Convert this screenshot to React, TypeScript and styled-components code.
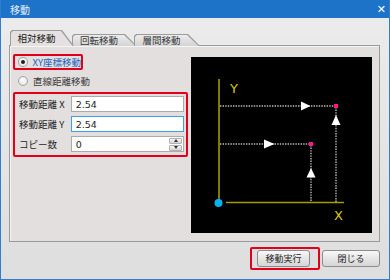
import React from "react";
import styled, { createGlobalStyle } from "styled-components";

const GlobalStyle = createGlobalStyle`
  html, body {
    margin: 0;
    padding: 0;
    background: #ffffff;
  }
  body {
    font-family: "Noto Sans CJK JP", "Liberation Sans", sans-serif;
    font-size: 9.5px;
  }
`;

const Window = styled.div`
  width: 390px;
  height: 280px;
  box-sizing: border-box;
  display: flex;
  flex-direction: column;
  border: 1px solid #2f7fd0;
  border-top: none;
  background: linear-gradient(180deg, #ececec 0%, #dedede 100%);
  overflow: hidden;
`;

const TitleBar = styled.div`
  height: 18px;
  flex: 0 0 18px;
  display: flex;
  align-items: center;
  justify-content: space-between;
  padding: 0 4px 0 10px;
  margin: 0 -1px;
  background: #1c73c7;
  color: #e6eef8;
  font-size: 10px;
`;

const CloseGlyph = styled.span`
  font-family: "DejaVu Sans", sans-serif;
  font-size: 11px;
  font-weight: bold;
  color: #ffffff;
  line-height: 1;
`;

const Body = styled.div`
  flex: 1;
  display: flex;
  flex-direction: column;
  padding: 12px 9px 0 8px;
`;

const TabRow = styled.div`
  display: flex;
  align-items: flex-end;
  height: 16px;
  padding-left: 1px;
  position: relative;
  z-index: 2;
  margin-bottom: -1px;
`;

const TabOuter = styled.div<{ $w: number; $h: number; $active?: boolean; $overlap?: number }>`
  width: ${(p) => p.$w}px;
  height: ${(p) => p.$h}px;
  margin-left: ${(p) => -(p.$overlap || 0)}px;
  background: #9c9c9c;
  clip-path: polygon(0 100%, 0 2px, 2px 0, ${(p) => p.$w - 12}px 0, 100% 100%);
  position: relative;
  z-index: ${(p) => (p.$active ? 3 : 1)};
  flex: 0 0 auto;
`;

const TabInner = styled.div<{ $w: number; $active?: boolean }>`
  position: absolute;
  inset: 1px 0 0 1px;
  background: ${(p) =>
    p.$active ? "#e5e1e0" : "linear-gradient(180deg, #ececec 0%, #d4d4d4 100%)"};
  clip-path: polygon(0 100%, 0 2px, 2px 0, ${(p) => p.$w - 14}px 0, calc(100% - 1.5px) 100%);
  display: flex;
  align-items: center;
  justify-content: center;
  padding-right: 12px;
  color: ${(p) => (p.$active ? "#1a1a1a" : "#3a3a3a")};
  font-size: 9.5px;
  line-height: 1;
`;

const Panel = styled.div`
  height: 197px;
  box-sizing: border-box;
  border: 1px solid #9a9a9a;
  box-shadow: inset 1px 1px 0 #f6f4f3;
  background: #e3dfde;
  display: flex;
  padding: 8px 6px 8px 3px;
  gap: 3px;
`;

const LeftColumn = styled.div`
  width: 175px;
  display: flex;
  flex-direction: column;
`;

const Highlight = styled.div<{ $w?: number }>`
  border: 2px solid #e0001b;
  border-radius: 2px;
  box-sizing: border-box;
  ${(p) => (p.$w ? `width: ${p.$w}px;` : "")}
`;

const RadioRow = styled.label<{ $checked?: boolean }>`
  display: flex;
  align-items: center;
  gap: 5px;
  height: 12px;
  padding: 0 0 0 3px;
  color: ${(p) => (p.$checked ? "#1764c0" : "#3c3c3c")};
  font-size: 9.5px;
  white-space: nowrap;
`;

const RadioCircle = styled.span<{ $checked?: boolean }>`
  width: 10px;
  height: 10px;
  box-sizing: border-box;
  border-radius: 50%;
  border: 1px solid #a4a4a4;
  background: radial-gradient(circle at 50% 40%, #ffffff 0%, #dcdcdc 100%);
  display: flex;
  align-items: center;
  justify-content: center;
  &::after {
    content: "";
    display: ${(p) => (p.$checked ? "block" : "none")};
    width: 4px;
    height: 4px;
    border-radius: 50%;
    background: #1e1e1e;
  }
`;

const PlainRadio = styled.div`
  margin: 5px 0 5px 0;
  padding-left: 2px;
`;

const FieldBox = styled(Highlight)`
  display: flex;
  flex-direction: column;
  gap: 4px;
  padding: 2px 2px 3px 2px;
`;

const FieldRow = styled.div`
  display: flex;
  align-items: center;
  height: 16px;
`;

const FieldLabel = styled.span`
  width: 53px;
  padding-left: 2px;
  color: #1e1e1e;
  font-size: 9.5px;
  white-space: nowrap;
`;

const Input = styled.div<{ $focused?: boolean }>`
  width: 116px;
  height: 16px;
  box-sizing: border-box;
  border: 1px solid ${(p) => (p.$focused ? "#3aa0ea" : "#ababab")};
  background: #ffffff;
  display: flex;
  align-items: center;
  padding-left: 4px;
  font-family: "DejaVu Sans", "Liberation Sans", sans-serif;
  font-size: 9.5px;
  color: #1e1e1e;
`;

const SpinInput = styled(Input)`
  justify-content: space-between;
  padding-right: 1px;
`;

const Spinner = styled.div`
  width: 13px;
  height: 13px;
  display: flex;
  flex-direction: column;
  gap: 1px;
`;

const SpinButton = styled.div<{ $down?: boolean }>`
  flex: 1;
  border: 1px solid #b0b0b0;
  border-radius: 1px;
  background: linear-gradient(180deg, #f6f6f6, #d6d6d6);
  display: flex;
  align-items: center;
  justify-content: center;
  &::after {
    content: "";
    border-left: 2.5px solid transparent;
    border-right: 2.5px solid transparent;
    ${(p) => (p.$down ? "border-top: 3px solid #333;" : "border-bottom: 3px solid #333;")}
  }
`;

const Canvas = styled.div`
  margin-top: 3px;
  width: 181px;
  height: 176px;
  background: #000000;
  flex: 0 0 auto;
`;

const Footer = styled.div`
  display: flex;
  justify-content: flex-end;
  align-items: center;
  gap: 2px;
  margin-top: 5px;
`;

const ButtonFrame = styled(Highlight)`
  padding: 1px 8px 1px 5px;
  border-width: 2.5px;
`;

const Button = styled.div<{ $w: number }>`
  width: ${(p) => p.$w}px;
  height: 17px;
  box-sizing: border-box;
  border: 1px solid #8c8c8c;
  border-radius: 3px;
  background: linear-gradient(180deg, #f8f8f8 0%, #e6e6e6 50%, #d6d6d6 100%);
  display: flex;
  align-items: center;
  justify-content: center;
  font-size: 9px;
  color: #1e1e1e;
`;

const AXIS = "#a39c00";
const DOT_LINE = "#bdbdbd";

const Diagram: React.FC = () => (
  <svg width="181" height="176" viewBox="0 0 181 176">
    <line x1="28" y1="22" x2="28" y2="146" stroke={AXIS} strokeWidth="1.6" />
    <line x1="35" y1="145.5" x2="153" y2="145.5" stroke={AXIS} strokeWidth="1.6" />
    <text x="39" y="36" fill="#d8cc00" fontSize="13" fontFamily="DejaVu Sans, sans-serif">Y</text>
    <text x="143" y="163" fill="#d8cc00" fontSize="13" fontFamily="DejaVu Sans, sans-serif">X</text>
    <g stroke={DOT_LINE} strokeWidth="1.4" strokeDasharray="1.4 1.2">
      <line x1="29" y1="49" x2="144" y2="49" />
      <line x1="145" y1="50" x2="145" y2="145" />
      <line x1="29" y1="87" x2="119" y2="87" />
      <line x1="120" y1="88" x2="120" y2="145" />
    </g>
    <g fill="#ffffff">
      <polygon points="110,44.5 119.5,49 110,53.5" />
      <polygon points="145,58 149.5,68 140.5,68" />
      <polygon points="73,82.5 83.5,87 73,91.5" />
      <polygon points="120,111 124.5,120.5 115.5,120.5" />
    </g>
    <rect x="143" y="47" width="4" height="4" fill="#ff1a8c" />
    <rect x="118" y="85" width="4" height="4" fill="#ff1a8c" />
    <circle cx="27.5" cy="146" r="4" fill="#00b4f4" />
  </svg>
);

const tabs = [
  { label: "相対移動", w: 64, h: 16, active: true, overlap: 0 },
  { label: "回転移動", w: 65, h: 12, active: false, overlap: 2 },
  { label: "層間移動", w: 66, h: 12, active: false, overlap: 3 },
];

const App: React.FC = () => {
  return (
    <>
      <GlobalStyle />
      <Window>
        <TitleBar>
          <span>移動</span>
          <CloseGlyph>✕</CloseGlyph>
        </TitleBar>
        <Body>
          <TabRow>
            {tabs.map((t) => (
              <TabOuter key={t.label} $w={t.w} $h={t.h} $active={t.active} $overlap={t.overlap}>
                <TabInner $w={t.w} $active={t.active}>
                  {t.label}
                </TabInner>
              </TabOuter>
            ))}
          </TabRow>
          <Panel>
            <LeftColumn>
              <Highlight $w={70}>
                <RadioRow $checked>
                  <RadioCircle $checked />
                  XY座標移動
                </RadioRow>
              </Highlight>
              <PlainRadio>
                <RadioRow>
                  <RadioCircle />
                  直線距離移動
                </RadioRow>
              </PlainRadio>
              <FieldBox>
                <FieldRow>
                  <FieldLabel>移動距離 X</FieldLabel>
                  <Input>2.54</Input>
                </FieldRow>
                <FieldRow>
                  <FieldLabel>移動距離 Y</FieldLabel>
                  <Input $focused>2.54</Input>
                </FieldRow>
                <FieldRow>
                  <FieldLabel>コピー数</FieldLabel>
                  <SpinInput>
                    0
                    <Spinner>
                      <SpinButton />
                      <SpinButton $down />
                    </Spinner>
                  </SpinInput>
                </FieldRow>
              </FieldBox>
            </LeftColumn>
            <Canvas>
              <Diagram />
            </Canvas>
          </Panel>
          <Footer>
            <ButtonFrame>
              <Button $w={53}>移動実行</Button>
            </ButtonFrame>
            <Button $w={58}>閉じる</Button>
          </Footer>
        </Body>
      </Window>
    </>
  );
};

export default App;
